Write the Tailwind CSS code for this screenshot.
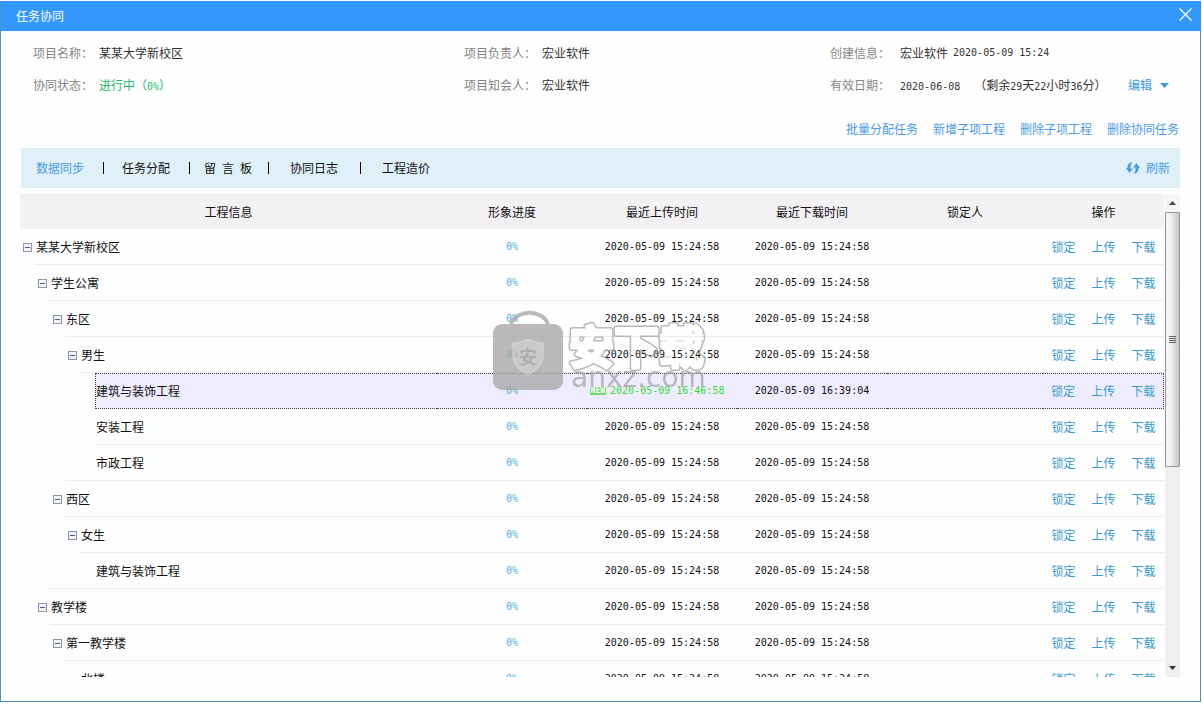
<!DOCTYPE html>
<html lang="zh-CN">
<head>
<meta charset="utf-8">
<title>任务协同</title>
<script src="https://cdn.jsdelivr.net/npm/@tailwindcss/browser@4"></script>
</head>
<body class="h-screen bg-white pt-px pr-px pb-0.5 font-['Noto_Sans_CJK_SC',sans-serif] text-xs leading-4 text-[#111]">
<div class="flex h-full flex-col border-x border-b border-[#4f94b8] bg-[#fefefe]">
  <header class="flex h-[30px] shrink-0 items-center justify-between bg-[#3398fe] pr-2 pl-[15px] text-white">
    <h1>任务协同</h1>
    <button type="button" aria-label="关闭" class="pb-1">
      <svg class="size-[13px]" viewBox="0 0 13 13" fill="none" stroke="currentColor" stroke-width="1.2"><path d="M.5.5l12 12M12.5.5l-12 12"/></svg>
    </button>
  </header>

  <dl class="grid shrink-0 auto-rows-[16px] grid-cols-[431fr_366fr_350fr] gap-y-4 pt-3.5 pr-5 pl-8 text-[#333]">
    <div class="flex gap-1.5"><dt class="text-[#868686]">项目名称：</dt><dd>某某大学新校区</dd></div>
    <div class="flex gap-1.5"><dt class="text-[#868686]">项目负责人：</dt><dd>宏业软件</dd></div>
    <div class="flex gap-2.5"><dt class="text-[#868686]">创建信息：</dt><dd class="flex gap-[5px]">宏业软件 <span class="font-['DejaVu_Sans_Mono',monospace] text-[10px]">2020-05-09 15:24</span></dd></div>
    <div class="flex gap-1.5"><dt class="text-[#868686]">协同状态：</dt><dd class="text-[#22b96a]">进行中（<span class="font-['DejaVu_Sans_Mono',monospace] text-[10px] leading-none">0%</span>）</dd></div>
    <div class="flex gap-1.5"><dt class="text-[#868686]">项目知会人：</dt><dd>宏业软件</dd></div>
    <div class="flex gap-2.5"><dt class="text-[#868686]">有效日期：</dt>
      <dd class="flex flex-1 justify-between whitespace-nowrap">
        <span><span class="mr-3.5 font-['DejaVu_Sans_Mono',monospace] text-[10px] leading-none">2020-06-08</span>（剩余<span class="font-['DejaVu_Sans_Mono',monospace] text-[10px] leading-none">29</span>天<span class="font-['DejaVu_Sans_Mono',monospace] text-[10px] leading-none">22</span>小时<span class="font-['DejaVu_Sans_Mono',monospace] text-[10px] leading-none">36</span>分）</span>
        <button type="button" class="mr-[11px] flex items-center gap-2 text-[#3f95e6]">编辑<svg class="h-[5px] w-[9px]" viewBox="0 0 9 5" fill="currentColor"><path d="M0 0h9L4.500 5z"/></svg></button>
      </dd>
    </div>
  </dl>

  <nav aria-label="任务操作" class="mt-7 mr-[21px] flex shrink-0 justify-end gap-[15px] text-[#4b9ce6]">
    <a href="#">批量分配任务</a><a href="#">新增子项工程</a><a href="#">删除子项工程</a><a href="#">删除协同任务</a>
  </nav>

  <div class="mt-[11px] mr-5 ml-5 flex h-10 shrink-0 items-center justify-between bg-[#dff0f9] pr-2.5 pl-[15px]">
    <nav aria-label="页签" class="flex items-center">
      <a href="#" class="text-[#4b9ce6]">数据同步</a>
      <i class="mr-[18px] ml-[19px] h-3 w-px bg-black"></i>
      <a href="#">任务分配</a>
      <i class="mr-3.5 ml-[19px] h-3 w-px bg-black"></i>
      <a href="#" class="flex gap-1.5"><span>留</span><span>言</span><span>板</span></a>
      <i class="mr-[21px] ml-4 h-3 w-px bg-black"></i>
      <a href="#">协同日志</a>
      <i class="mr-[21px] ml-[22px] h-3 w-px bg-black"></i>
      <a href="#">工程造价</a>
    </nav>
    <button type="button" class="flex items-center gap-1.5 text-[#4b9ce6]">
      <svg class="size-3.5" viewBox="0 0 14 14" fill="currentColor"><path d="M6.500 1C3 1.500 1.200 4 1.500 7H0l3.500 5L7 7.500H4.500C4.200 5 4.800 3 6.500 1zM7.500 13c3.500-.5 5.300-3 5-6H14l-3.500-5L7 6.500h2.500c.3 2.500-.3 4.500-2 6.500z"/></svg>
      刷新
    </button>
  </div>

  <main class="relative mt-1.5 mr-5 mb-6 ml-[19px] flex min-h-0 flex-1 gap-px">
    <div class="min-w-0 flex-1 overflow-hidden">
      <table class="w-full table-fixed border-separate border-spacing-0">
        <colgroup><col><col class="w-[150px]"><col class="w-[150px]"><col class="w-[150px]"><col class="w-[156px]"><col class="w-[121px]"></colgroup>
        <thead>
          <tr class="h-[35px] bg-[#f3f1f4]">
            <th class="p-0 font-normal">工程信息</th><th class="p-0 font-normal">形象进度</th><th class="p-0 font-normal">最近上传时间</th><th class="p-0 font-normal">最近下载时间</th><th class="p-0 font-normal">锁定人</th><th class="p-0 font-normal">操作</th>
          </tr>
        </thead>
        <tbody id="rows"></tbody>
      </table>
    </div>

    <div class="flex w-[15px] shrink-0 flex-col bg-[#f0eff1]">
      <button type="button" aria-label="向上滚动" class="flex h-[18px] shrink-0 items-center justify-center bg-[#f6f5f7]">
        <svg class="h-1 w-[7px]" viewBox="0 0 7 4"><path d="M0 4h7L3.500 0z" fill="#444"/></svg>
      </button>
      <div class="flex-1">
        <div class="flex h-[57%] flex-col items-center justify-center gap-px rounded-[1px] border border-[#96969a] bg-linear-to-r from-[#f4f4f5] from-30% to-[#c4c4c8]">
          <i class="h-px w-[7px] bg-[#666]"></i><i class="h-px w-[7px] bg-[#666]"></i><i class="h-px w-[7px] bg-[#666]"></i><i class="h-px w-[7px] bg-[#666]"></i>
        </div>
      </div>
      <button type="button" aria-label="向下滚动" class="flex h-[18px] shrink-0 items-center justify-center">
        <svg class="h-1 w-[7px]" viewBox="0 0 7 4"><path d="M0 0h7L3.500 4z" fill="#333"/></svg>
      </button>
    </div>

    <svg class="pointer-events-none absolute top-[110px] left-[470px] h-[92px] w-[222px]" viewBox="490 304 222 92" aria-hidden="true">
      <defs>
        <mask id="ring" maskUnits="userSpaceOnUse" x="560" y="310" width="152" height="70">
          <g font-family="Noto Sans CJK SC" font-weight="700" font-size="45" stroke-linejoin="round">
            <text x="569" y="364" fill="#fff" stroke="#fff" stroke-width="6">安下载</text>
            <text x="569" y="364" fill="#000" stroke="#000" stroke-width="3">安下载</text>
          </g>
        </mask>
      </defs>
      <g opacity=".78">
        <path d="M511 324c6-15 31-15 37 0" fill="none" stroke="#a8a8a8" stroke-width="4"/>
        <rect x="493" y="324" width="70" height="66" rx="9" fill="#a8a8a8"/>
        <path d="M528 339c5 3 10 4 15 4v12c0 9-6 15-15 20-9-5-15-11-15-20v-12c5 0 10-1 15-4z" fill="#bcbcbc" stroke="#d0d0d0"/>
        <text x="519" y="364" font-family="Noto Sans CJK SC" font-weight="700" font-size="18" fill="#989898">安</text>
        <rect x="560" y="310" width="152" height="70" fill="#a8a8a8" mask="url(#ring)"/>
        <text x="571" y="387" font-family="DejaVu Sans" font-size="28" fill="#a8a8a8">anxz.com</text>
      </g>
    </svg>
  </main>
</div>

<script>
  const T = '2020-05-09 15:24:58';
  // [name, depth, has children]
  const data = [
    ['某某大学新校区', 0, true], ['学生公寓', 1, true], ['东区', 2, true], ['男生', 3, true],
    ['建筑与装饰工程', 4, false], ['安装工程', 4, false], ['市政工程', 4, false],
    ['西区', 2, true], ['女生', 3, true], ['建筑与装饰工程', 4, false],
    ['教学楼', 1, true], ['第一教学楼', 2, true], ['北楼', 3, false]
  ];
  const toggle = '<button type="button" aria-label="折叠" class="flex size-[9px] items-center justify-center border border-[#8f96a6] bg-[#f2f3f7]"><i class="h-px w-[5px] bg-[#4a5a8c]"></i></button>';
  document.getElementById('rows').innerHTML = data.map(([name, depth, parent], i) => {
    const next = data[i + 1] ? data[i + 1][1] : depth;
    const selected = i === 4;
    // the divider starts at the shallower of this row and the next one
    const line = Math.min(depth, next);
    const edge = selected ? 'border-y border-dotted border-[#444] bg-[#efecff]' : 'border-b border-[#ececef]';
    const time = "font-['DejaVu_Sans_Mono',monospace] text-[10px]";
    const up = selected
      ? '<span class="flex items-center justify-center gap-1 pr-2.5 text-[#35dc35]"><b class="h-2 bg-[#6fd86f] px-px font-[\'DejaVu_Sans_Mono\',monospace] text-[8px] leading-2 text-white">NEW</b>2020-05-09 16:46:58</span>'
      : T;
    return `<tr class="h-9">
      <td class="p-0"><div class="flex h-9">
        <span class="flex shrink-0 items-center justify-end pr-[3px]" style="width:${15 + 15 * line}px">${parent ? toggle : ''}</span>
        <span class="flex flex-1 items-center ${edge} ${selected ? 'border-l' : ''}" style="padding-left:${(selected ? 0 : 1) + 15 * (depth - line)}px">${name}</span>
      </div></td>
      <td class="p-0 text-center text-[#4fb0dc] ${time} ${edge}">0%</td>
      <td class="p-0 text-center ${time} ${edge}">${up}</td>
      <td class="p-0 text-center ${time} ${edge}">${selected ? '2020-05-09 16:39:04' : T}</td>
      <td class="p-0 ${edge}"></td>
      <td class="p-0 ${edge} ${selected ? 'border-r' : ''}"><div class="flex justify-center gap-4 text-[#3a9ccc]"><a href="#">锁定</a><a href="#">上传</a><a href="#">下载</a></div></td>
    </tr>`;
  }).join('');
</script>
</body>
</html>
